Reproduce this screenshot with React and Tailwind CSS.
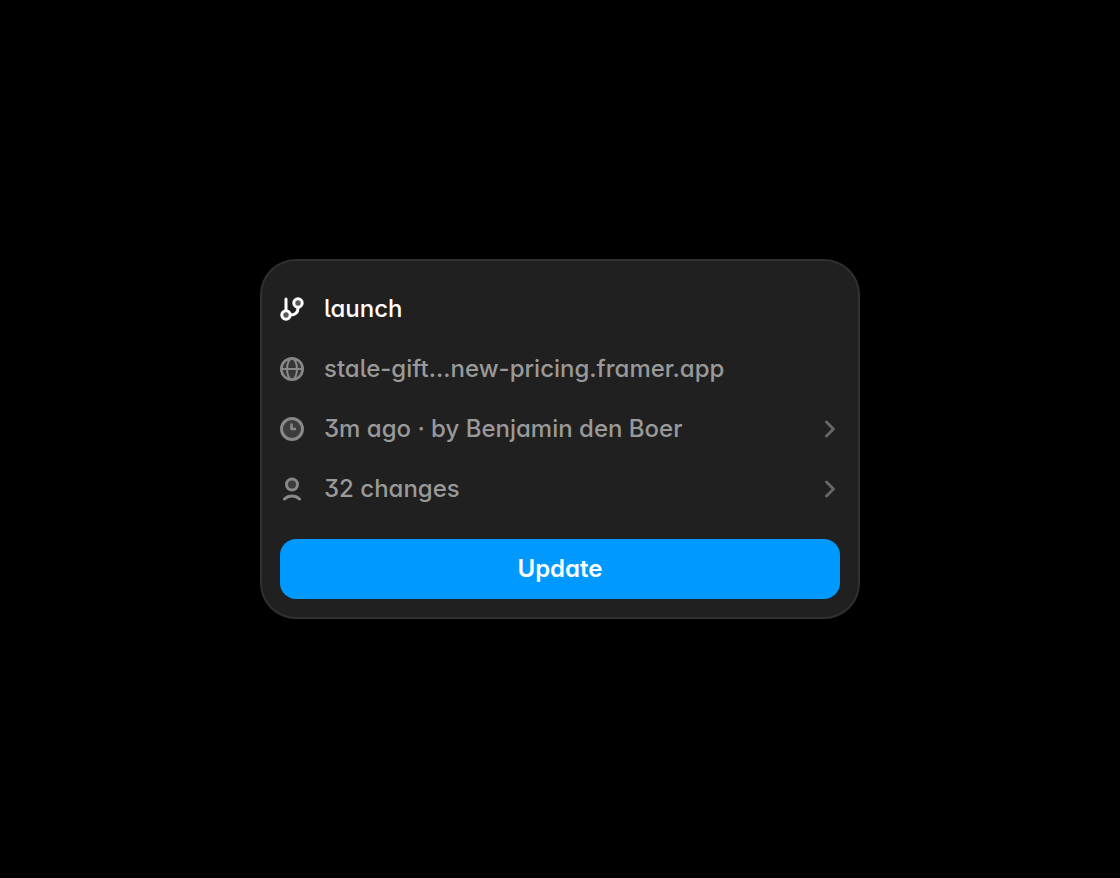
import React from "react";

function BranchIcon() {
  return (
    <svg width="24" height="24" viewBox="0 0 24 24" fill="none" stroke="currentColor" strokeWidth="3" strokeLinecap="round" aria-hidden="true">
      <path d="M6 2v12" />
      <path d="M18 10v1c0 4.5-3 7-8 7" />
      <circle cx="6" cy="18" r="4.2" fill="#585858" />
      <circle cx="18" cy="6" r="4.2" fill="#585858" />
    </svg>
  );
}

function GlobeIcon() {
  return (
    <svg width="24" height="24" viewBox="0 0 24 24" fill="none" stroke="currentColor" strokeWidth="2" aria-hidden="true">
      <circle cx="12" cy="12" r="10.7" fill="#363636" strokeWidth="2.6" />
      <ellipse cx="12" cy="12" rx="5" ry="10.5" />
      <path d="M1 12h22" />
    </svg>
  );
}

function ClockIcon() {
  return (
    <svg width="24" height="24" viewBox="0 0 24 24" fill="none" stroke="currentColor" strokeWidth="3" aria-hidden="true">
      <circle cx="12" cy="12" r="10.5" fill="#3c3c3c" />
      <path d="M11.5 6.5V12H16" strokeWidth="2.6" strokeLinejoin="round" />
    </svg>
  );
}

function PersonIcon() {
  return (
    <svg width="24" height="24" viewBox="0 0 24 24" fill="none" stroke="currentColor" strokeWidth="3" strokeLinecap="round" aria-hidden="true">
      <circle cx="12" cy="7.5" r="5.5" fill="#3c3c3c" />
      <path d="M4.5 22c4-4 11-4 15 0" />
    </svg>
  );
}

function Chevron() {
  return (
    <svg className="mr-1 text-[#666666]" width="12" height="20" viewBox="0 0 12 20" fill="none" stroke="currentColor" strokeWidth="3" strokeLinecap="round" strokeLinejoin="round" aria-hidden="true">
      <path d="M2.5 3l7 7-7 7" />
    </svg>
  );
}

const rows = [
  { icon: <GlobeIcon />, label: "stale-gift...new-pricing.framer.app" },
  { icon: <ClockIcon />, label: "3m ago · by Benjamin den Boer", more: true },
  { icon: <PersonIcon />, label: "32 changes", more: true },
];

function Row({ icon, label, more }) {
  const content = (
    <>
      <span className="text-[#888888]">{icon}</span>
      <span className="flex-1 text-left">{label}</span>
      {more && <Chevron />}
    </>
  );
  if (more) {
    return (
      <button type="button" className="flex h-[60px] w-full items-center gap-5 text-[#999999]">
        {content}
      </button>
    );
  }
  return <div className="flex h-[60px] items-center gap-5 text-[#999999]">{content}</div>;
}

export default function App() {
  return (
    <main className="grid min-h-screen place-items-center bg-black font-['Inter',sans-serif] text-2xl font-medium antialiased [font-feature-settings:'cv05','cv09','cv11','ss03']">
      <section className="w-full max-w-[600px] rounded-[36px] border-2 border-[#303030] bg-[#202020] p-[18px]">
        <div className="flex h-[60px] items-center gap-5 text-white">
          <BranchIcon />
          <span>launch</span>
        </div>
        {rows.map((row) => (
          <Row key={row.label} {...row} />
        ))}
        <button type="button" className="mt-5 h-[60px] w-full rounded-2xl bg-[#0099ff] font-semibold text-white">
          Update
        </button>
      </section>
    </main>
  );
}
